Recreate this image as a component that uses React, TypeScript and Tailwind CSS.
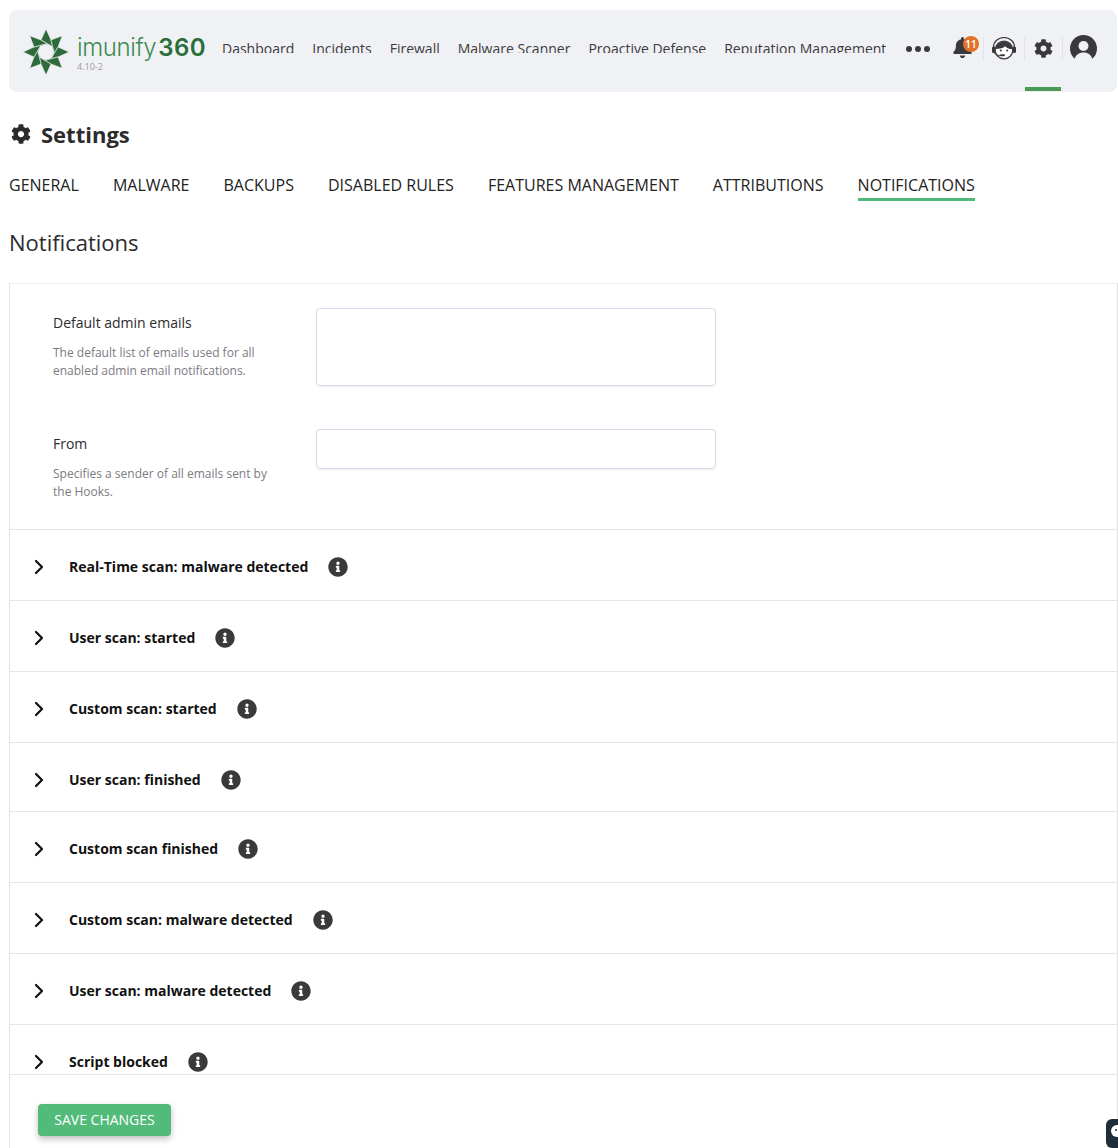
import { ChevronRight } from "lucide-react";
import { FaBell, FaCog, FaInfoCircle } from "react-icons/fa";

const navItems = ["Dashboard", "Incidents", "Firewall", "Malware Scanner", "Proactive Defense", "Reputation Management"];
const tabs = ["GENERAL", "MALWARE", "BACKUPS", "DISABLED RULES", "FEATURES MANAGEMENT", "ATTRIBUTIONS", "NOTIFICATIONS"];
const rows = [
  { title: "Real-Time scan: malware detected", h: "h-[71px]" },
  { title: "User scan: started", h: "h-[71px]" },
  { title: "Custom scan: started", h: "h-[71px]" },
  { title: "User scan: finished", h: "h-[69px]" },
  { title: "Custom scan finished", h: "h-[71px]" },
  { title: "Custom scan: malware detected", h: "h-[71px]" },
  { title: "User scan: malware detected", h: "h-[71px]" },
];

function Logo() {
  const blades = [0, 45, 90, 135, 180, 225, 270, 315];
  return (
    <svg viewBox="0 0 46 46" className="w-[46px] h-[46px] shrink-0">
      {blades.map((a) => (
        <path
          key={a}
          d="M23 0 L28 11 L31 23 L28.7 17.3 L18 11z"
          fill="#2f6b3a"
          stroke="#f0f1f5"
          strokeWidth="0.6"
          transform={`rotate(${a} 23 23)`}
        />
      ))}
    </svg>
  );
}

function Support() {
  return (
    <svg viewBox="0 0 26 24" className="w-[26px] h-[24px]">
      <path d="M2.500 12V10a10.500 9.500 0 0 1 21 0v2" fill="none" stroke="#3a3a3c" strokeWidth="1.2" />
      <circle cx="13" cy="13" r="8.800" fill="#fff" stroke="#3a3a3c" strokeWidth="1.2" />
      <path d="M4.500 12C5 7.500 8.500 4.500 13 4.500S21 7.500 21.500 12c-3 0-5.500-.8-7.500-2.800C12.500 11 9 12 4.500 12z" fill="#3a3a3c" />
      <rect x="1" y="9.500" width="3.500" height="6.500" rx="1.500" fill="#3a3a3c" />
      <rect x="21.500" y="9.500" width="3.500" height="6.500" rx="1.500" fill="#3a3a3c" />
      <circle cx="9.800" cy="13.500" r="1" fill="#3a3a3c" />
      <circle cx="16.200" cy="13.500" r="1" fill="#3a3a3c" />
      <path d="M3.500 16c.5 1.600 2.800 2.500 6 2.500" fill="none" stroke="#3a3a3c" strokeWidth="1" />
      <rect x="9" y="17.300" width="5" height="2" rx="1" fill="#3a3a3c" />
    </svg>
  );
}

function Avatar() {
  return (
    <svg viewBox="0 0 27 27" className="w-[27px] h-[27px]">
      <circle cx="13.500" cy="13.500" r="13.500" fill="#3a3a3c" />
      <circle cx="13.500" cy="11" r="5" fill="#f0f1f5" />
      <path d="M4.500 25C5 20 9 17.500 13.500 17.500S22 20 22.500 25L24 28H3z" fill="#f0f1f5" />
    </svg>
  );
}

function NavBar() {
  return (
    <div className="h-[82px] rounded-lg bg-[#f0f1f5] flex pl-[14px] pr-[20px] relative">
      <div className="flex items-start pt-[19px] shrink-0">
        <Logo />
        <div className="ml-[8px] mt-[7px] w-[128px]">
          <div className="h-[24px] flex items-baseline leading-[24px] font-['Inter',sans-serif] whitespace-nowrap">
            <span className="text-[24px] font-light text-[#3d8a52] tracking-[-0.4px]">imunify</span>
            <span className="text-[24px] font-semibold text-[#2a6e3b] ml-[2px] tracking-[0.4px]">360</span>
          </div>
          <div className="text-[9px] leading-[10px] mt-[2px] text-[#9a9a9a]">4.10-2</div>
        </div>
      </div>
      <div className="ml-[17px] flex gap-[18px] h-[43px] pt-[29px] overflow-hidden items-start text-[14px] leading-[20px] text-[#3a3a3c] whitespace-nowrap">
        {navItems.map((n) => (
          <span key={n}>{n}</span>
        ))}
      </div>
      <div className="ml-[20px] mt-[36px] h-[6px] flex gap-[3px] items-center">
        <span className="w-[6px] h-[6px] rounded-full bg-[#3a3a3c]" />
        <span className="w-[6px] h-[6px] rounded-full bg-[#3a3a3c]" />
        <span className="w-[6px] h-[6px] rounded-full bg-[#3a3a3c]" />
      </div>
      <div className="flex items-start ml-auto pt-[27px]">
        <div className="w-[36px] relative pl-[6px]">
          <FaBell className="w-[19px] h-[21px] text-[#3a3a3c]" />
          <span className="absolute left-[16px] -top-[1px] w-4 h-4 rounded-full bg-[#e2702a] text-white text-[10px] font-semibold leading-4 text-center">11</span>
        </div>
        <div className="border-l border-[#e3e4e8] h-[23px] w-[41px] pl-[7px]">
          <Support />
        </div>
        <div className="border-l border-[#e3e4e8] h-[23px] w-[38px] pl-[9px] pt-[2px]">
          <FaCog className="w-[19px] h-[19px] text-[#3a3a3c]" />
        </div>
        <div className="border-l border-[#e3e4e8] h-[23px] pl-[7px]">
          <div className="-mt-[2px]">
            <Avatar />
          </div>
        </div>
      </div>
      <span className="absolute left-[1016px] top-[77px] w-9 h-1 bg-[#4a9a57]" />
    </div>
  );
}

export default function App() {
  return (
    <div className="h-[1148px] overflow-hidden bg-white pl-[9px] pt-[10px] relative font-['Open_Sans',sans-serif] text-[#111]">
      <div className="w-[1108px]">
        <NavBar />
      </div>
      <div className="flex items-center gap-[10px] pl-[2px] mt-[27px] h-[30px]">
        <FaCog className="w-5 h-5 text-[#2b2b2d]" />
        <h1 className="text-[22px] leading-[30px] font-bold text-[#2b2b2d]">Settings</h1>
      </div>
      <div className="flex gap-[34.1px] mt-[25px] h-[34px] text-[16px] leading-[22px] text-[#222]">
        {tabs.map((t, i) => (
          <span key={t} className={i === 6 ? "h-[27px] border-b-[3px] border-[#4fb878]" : ""}>{t}</span>
        ))}
      </div>
      <h2 className="mt-[19px] text-[22px] leading-[30px] text-[#2b2b2d]">Notifications</h2>
      <div className="mt-[26px] h-[900px] border border-[#e2e2e4] border-t-[#efefef] border-b-0 overflow-hidden">
        <div className="h-[246px] border-b border-[#e6e6e8] pt-[24px] pl-[43px] flex flex-col">
          <div className="flex h-[78px] items-start">
            <div className="w-[263px] pt-[5px]">
              <div className="text-[14px] leading-[20px] text-[#2b2b2d]">Default admin emails</div>
              <p className="mt-[11px] text-[12px] leading-[18px] text-[#7b7b7f]">The default list of emails used for all<br />enabled admin email notifications.</p>
            </div>
            <div className="w-[400px] h-[78px] rounded border border-[#dcdbeb] shadow-[0_1px_2px_rgba(0,0,0,0.08)]" />
          </div>
          <div className="flex items-start mt-[43px]">
            <div className="w-[263px] pt-[5px]">
              <div className="text-[14px] leading-[20px] text-[#2b2b2d]">From</div>
              <p className="mt-[11px] text-[12px] leading-[18px] text-[#7b7b7f]">Specifies a sender of all emails sent by<br />the Hooks.</p>
            </div>
            <div className="w-[400px] h-[40px] rounded border border-[#dcdbeb] shadow-[0_1px_2px_rgba(0,0,0,0.08)]" />
          </div>
        </div>
        {rows.map((r) => (
          <div key={r.title} className={`${r.h} border-b border-[#e6e6e8] pl-[17px] pt-[27px]`}>
            <div className="flex items-center h-5">
              <ChevronRight className="w-6 h-6 text-[#111]" strokeWidth={2.25} />
              <span className="ml-[18px] text-[14px] leading-[20px] font-bold">{r.title}</span>
              <FaInfoCircle className="ml-[20px] w-5 h-5 text-[#3a3a3c]" />
            </div>
          </div>
        ))}
        <div className="h-[50px] border-b border-[#e6e6e8] pl-[17px] pt-[27px]">
          <div className="flex items-center h-5">
            <ChevronRight className="w-6 h-6 text-[#111]" strokeWidth={2.25} />
            <span className="ml-[18px] text-[14px] leading-[20px] font-bold">Script blocked</span>
            <FaInfoCircle className="ml-[20px] w-5 h-5 text-[#3a3a3c]" />
          </div>
        </div>
        <button className="ml-[28px] mt-[29px] w-[133px] h-8 pb-[2px] rounded bg-[#52bb79] text-white text-[14px] shadow-[0_3px_6px_rgba(0,0,0,0.25)]">SAVE CHANGES</button>
      </div>
      <div className="absolute right-0 top-[1119px] w-3 h-[29px] rounded-l-md bg-[#1f2d3a] overflow-hidden">
        <span className="absolute left-[5px] top-[6px] w-[12px] h-[12px] rounded-full bg-white" />
        <span className="absolute left-[9px] top-[10px] w-[2px] h-[2px] rounded-full bg-[#1f2d3a]" />
      </div>
    </div>
  );
}
